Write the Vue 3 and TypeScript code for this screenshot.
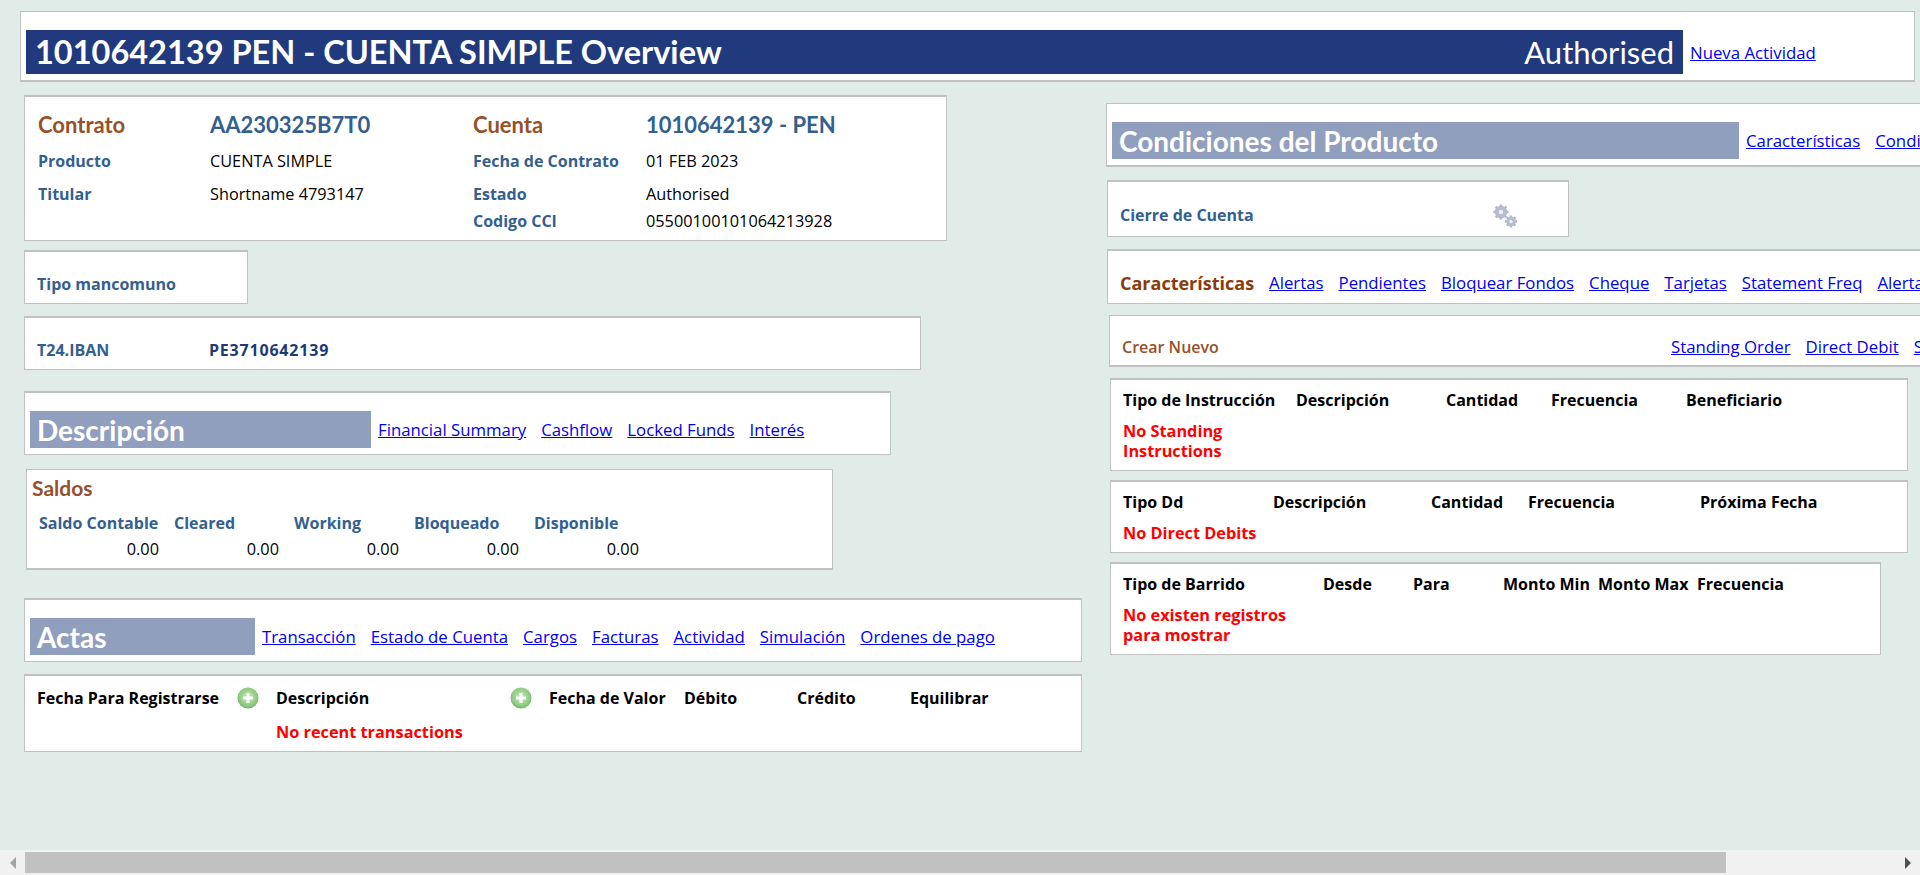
<script setup lang="ts">
const descLinks = ['Financial Summary', 'Cashflow', 'Locked Funds', 'Interés']
const actLinks = ['Transacción', 'Estado de Cuenta', 'Cargos', 'Facturas', 'Actividad', 'Simulación', 'Ordenes de pago']
const featLinks = ['Alertas', 'Pendientes', 'Bloquear Fondos', 'Cheque', 'Tarjetas', 'Statement Freq', 'Alertas Cuenta']
const saldos = ['Saldo Contable', 'Cleared', 'Working', 'Bloqueado', 'Disponible']
const instr = [['Tipo de Instrucción', 173], ['Descripción', 150], ['Cantidad', 105], ['Frecuencia', 135], ['Beneficiario', 150]] as const
const dd = [['Tipo Dd', 150], ['Descripción', 158], ['Cantidad', 97], ['Frecuencia', 172], ['Próxima Fecha', 150]] as const
const sweep = [['Tipo de Barrido', 200], ['Desde', 90], ['Para', 90], ['Monto Min', 95], ['Monto Max', 99], ['Frecuencia', 120]] as const
</script>

<template>
  <div class="page">
    <div class="viewport">
      <div class="canvas">
        <header class="panel top">
          <div class="topbar">
            <h1>1010642139 PEN - CUENTA SIMPLE Overview</h1>
            <span class="status">Authorised</span>
          </div>
          <a class="link newact" href="#">Nueva Actividad</a>
        </header>

        <div class="cols">
          <section class="left">
            <div class="panel thick contract">
              <div class="c-grid">
                <span class="big brown">Contrato</span><span class="big blue">AA230325B7T0</span><span class="big brown">Cuenta</span><span class="big blue">1010642139 - PEN</span>
                <span class="lbl">Producto</span><span class="val">CUENTA SIMPLE</span><span class="lbl">Fecha de Contrato</span><span class="val">01 FEB 2023</span>
                <span class="lbl">Titular</span><span class="val">Shortname 4793147</span><span class="lbl">Estado</span><span class="val">Authorised</span>
                <span></span><span></span><span class="lbl">Codigo CCI</span><span class="val">05500100101064213928</span>
              </div>
            </div>
            <div class="panel thick tipo"><span class="lbl">Tipo mancomuno</span></div>
            <div class="panel thick iban"><span class="lbl brown iban-k">T24.IBAN</span><span class="lbl navy">PE3710642139</span></div>
            <div class="panel thick desc">
              <h2 class="bar bar-desc">Descripción</h2>
              <nav class="links"><a v-for="l in descLinks" :key="l" class="link" href="#">{{ l }}</a></nav>
            </div>
            <div class="panel saldos">
              <div class="saldos-title brown">Saldos</div>
              <div class="s-grid">
                <span v-for="s in saldos" :key="s" class="lbl">{{ s }}</span>
                <span v-for="s in saldos" :key="s + 'v'" class="val num">0.00</span>
              </div>
            </div>
            <div class="panel thick actas">
              <h2 class="bar bar-act">Actas</h2>
              <nav class="links"><a v-for="l in actLinks" :key="l" class="link" href="#">{{ l }}</a></nav>
            </div>
            <div class="panel thick trans">
              <div class="t-head">
                <span class="th w1">Fecha Para Registrarse</span>
                <svg class="plus" viewBox="0 0 22 22"><defs><radialGradient id="g1" cx=".5" cy=".45" r=".6"><stop offset="0" stop-color="#c8e8bc"/><stop offset=".7" stop-color="#8ecb80"/><stop offset="1" stop-color="#66a95e"/></radialGradient></defs><circle cx="11" cy="11" r="10.500" fill="url(#g1)"/><path d="M9.500 6h3v3.500H16v3h-3.500V16h-3v-3.500H6v-3h3.500z" fill="#fff"/></svg>
                <span class="th w2">Descripción</span>
                <svg class="plus" viewBox="0 0 22 22"><circle cx="11" cy="11" r="10.500" fill="url(#g1)"/><path d="M9.500 6h3v3.500H16v3h-3.500V16h-3v-3.500H6v-3h3.500z" fill="#fff"/></svg>
                <span class="th w3">Fecha de Valor</span>
                <span class="th w4">Débito</span>
                <span class="th w4">Crédito</span>
                <span class="th">Equilibrar</span>
              </div>
              <div class="none trans-none">No recent transactions</div>
            </div>
          </section>

          <section class="right">
            <div class="panel cond">
              <h2 class="bar bar-cond">Condiciones del Producto</h2>
              <nav class="links"><a class="link" href="#">Características</a><a class="link" href="#">Condiciones</a></nav>
            </div>
            <div class="panel thick cierre">
              <span class="lbl cierre-l">Cierre de Cuenta</span>
              <svg class="gears" viewBox="0 0 24 24"><g stroke="#aeb3c8" stroke-width="2.400"><path d="M8 .5v15M.5 8h15M2.700 2.700l10.600 10.600M13.300 2.700L2.700 13.300"/><path d="M18 11.500v12M12 17.500h12M13.800 13.300l8.400 8.400M22.200 13.300l-8.400 8.400"/></g><circle cx="8" cy="8" r="6.300" fill="#b6bbce"/><circle cx="18" cy="17.500" r="4.800" fill="#b6bbce"/><circle cx="8" cy="8" r="2.200" fill="#eceef3"/><circle cx="18" cy="17.500" r="1.700" fill="#eceef3"/></svg>
            </div>
            <div class="panel thick feat">
              <span class="feat-title">Características</span>
              <a v-for="l in featLinks" :key="l" class="link" href="#">{{ l }}</a>
            </div>
            <div class="panel crear">
              <span class="crear-title">Crear Nuevo</span>
              <nav class="links crear-links"><a class="link" href="#">Standing Order</a><a class="link" href="#">Direct Debit</a><a class="link" href="#">Sweep</a></nav>
            </div>
            <div class="panel thick tbl t-instr">
              <div class="t-row"><span v-for="c in instr" :key="c[0]" class="th" :style="{ width: c[1] + 'px' }">{{ c[0] }}</span></div>
              <div class="none narrow">No Standing Instructions</div>
            </div>
            <div class="panel thick tbl t-dd">
              <div class="t-row"><span v-for="c in dd" :key="c[0]" class="th" :style="{ width: c[1] + 'px' }">{{ c[0] }}</span></div>
              <div class="none">No Direct Debits</div>
            </div>
            <div class="panel thick tbl t-sweep">
              <div class="t-row"><span v-for="c in sweep" :key="c[0]" class="th" :style="{ width: c[1] + 'px' }">{{ c[0] }}</span></div>
              <div class="none narrow">No existen registros para mostrar</div>
            </div>
          </section>
        </div>
      </div>
    </div>
    <div class="scrollbar">
      <button class="arrow" aria-label="left"><i class="tri tri-l"></i></button>
      <div class="track"><div class="thumb"></div></div>
      <button class="arrow" aria-label="right"><i class="tri tri-r"></i></button>
    </div>
  </div>
</template>

<style>
html, body { margin: 0; height: 100%; overflow: hidden; }
</style>

<style scoped>
.page { height: 875px; width: 1920px; display: flex; flex-direction: column; background: #e1ebe8; font-family: "Open Sans", sans-serif; font-size: 16.3px; line-height: 20px; color: #000; overflow: hidden; }
.viewport { flex: 1; min-height: 0; overflow: hidden; }
.canvas { width: 2200px; padding: 11px 0 0 20px; box-sizing: border-box; }
.panel { background: #fff; border: 1px solid #c0c2c2; border-bottom-width: 2px; box-sizing: border-box; }
.panel.thick { border-top-width: 2px; border-bottom-width: 1px; }
.top { width: 1895px; height: 71px; padding: 18px 0 0 5px; display: flex; align-items: flex-start; }
.topbar { width: 1657px; height: 44px; background: #213a7d; display: flex; justify-content: space-between; align-items: center; color: #fff; padding: 0 9px; box-sizing: border-box; font-family: Lato, sans-serif; }
h1 { margin: 0; font-size: 32.5px; line-height: 44px; font-weight: 700; }
.status { font-size: 31px; }
.link { color: #0000ee; text-decoration: underline; white-space: nowrap; font-size: 16.8px; }
.newact { margin: 13px 0 0 7px; }
.cols { display: flex; }
.left { width: 1082px; padding: 13px 0 0 4px; box-sizing: border-box; display: flex; flex-direction: column; align-items: flex-start; }
.right { padding: 21px 0 0 24px; display: flex; flex-direction: column; align-items: flex-start; }
.brown { color: #97512a; }
.blue { color: #33608f; }
.navy { color: #1c3a78 !important; letter-spacing: .8px; font-weight: 600; }
.lbl { color: #33608f; font-weight: 700; white-space: nowrap; font-size: 16px; }
.val { white-space: nowrap; }
.big { font-family: Lato, sans-serif; font-size: 22px; font-weight: 700; }
.contract { width: 923px; height: 146px; padding: 11px 0 0 13px; }
.c-grid { display: grid; grid-template-columns: 172px 263px 173px 1fr; grid-template-rows: 34px 38px 28px 26px; align-items: center; }
.tipo { width: 224px; height: 54px; margin-top: 9px; padding: 22px 0 0 12px; }
.iban { width: 897px; height: 54px; margin-top: 12px; padding: 22px 0 0 12px; display: flex; }
.iban-k { width: 172px; }
.desc { width: 867px; height: 64px; margin-top: 21px; padding: 18px 0 6px 5px; display: flex; align-items: center; }
.bar { margin: 0; height: 37px; background: #919fbf; color: #fff; font-family: Lato, sans-serif; font-size: 28px; font-weight: 700; display: flex; align-items: center; padding-left: 7px; box-sizing: border-box; flex: none; }
.bar-desc { width: 341px; }
.bar-act { width: 225px; }
.bar-cond { width: 627px; }
.links { display: flex; gap: 15px; margin-left: 7px; }
.saldos { width: 807px; height: 101px; margin: 14px 0 0 2px; padding: 8px 0 0 5px; }
.saldos-title { font-family: Lato, sans-serif; font-size: 21px; font-weight: 700; }
.s-grid { display: grid; grid-template-columns: 120px repeat(4, 105px); column-gap: 15px; row-gap: 6px; padding: 15px 0 0 7px; }
.num { text-align: right; }
.actas { width: 1058px; height: 64px; margin-top: 28px; padding: 18px 0 6px 5px; display: flex; align-items: center; }
.trans { width: 1058px; height: 78px; margin-top: 12px; padding: 10px 0 0 12px; }
.t-head { display: flex; align-items: center; height: 24px; }
.th { font-weight: 700; font-size: 16px; white-space: nowrap; flex: none; }
.w1 { width: 200px; }
.w2 { width: 234px; margin-left: 17px; }
.w3 { width: 135px; margin-left: 17px; }
.w4 { width: 113px; }
.plus { width: 22px; height: 22px; flex: none; }
.none { color: #f00; font-weight: 700; font-size: 16.3px; line-height: 20px; }
.trans-none { margin: 12px 0 0 239px; }
.cond { width: 1200px; height: 64px; padding: 18px 0 6px 5px; display: flex; align-items: center; }
.cierre { width: 462px; height: 57px; margin: 13px 0 0 1px; padding: 23px 0 0 12px; display: flex; }
.cierre-l { width: 373px; flex: none; }
.gears { width: 24px; height: 24px; margin: -1px 0 0 0; flex: none; filter: blur(.4px); }
.feat { width: 1000px; height: 55px; margin: 12px 0 0 1px; padding: 22px 0 0 12px; display: flex; gap: 15px; }
.feat-title { color: #8a3a0b; font-size: 18px; font-weight: 700; white-space: nowrap; }
.crear { width: 1000px; height: 52px; margin: 11px 0 0 3px; padding: 21px 0 0 12px; display: flex; }
.crear-title { color: #97512a; font-weight: 600; font-size: 16px; width: 549px; flex: none; }
.crear-links { margin: 0; }
.tbl { padding: 10px 0 0 12px; margin: 9px 0 0 4px; width: 798px; }
.t-instr { height: 93px; margin-top: 11px; }
.t-dd { height: 73px; }
.t-sweep { height: 93px; width: 771px; }
.t-row { display: flex; height: 20px; margin-bottom: 11px; }
.narrow { width: 172px; }
.scrollbar { height: 25px; background: #f1f1f1; display: flex; align-items: center; flex: none; }
.arrow { width: 25px; height: 25px; border: 0; padding: 0; background: transparent; display: flex; align-items: center; justify-content: center; flex: none; }
.tri { width: 0; height: 0; border-top: 6px solid transparent; border-bottom: 6px solid transparent; }
.tri-l { border-right: 6px solid #a3a3a3; }
.tri-r { border-left: 6px solid #505050; }
.track { flex: 1; height: 21px; }
.thumb { width: 1701px; height: 21px; background: #c1c1c1; }
</style>
